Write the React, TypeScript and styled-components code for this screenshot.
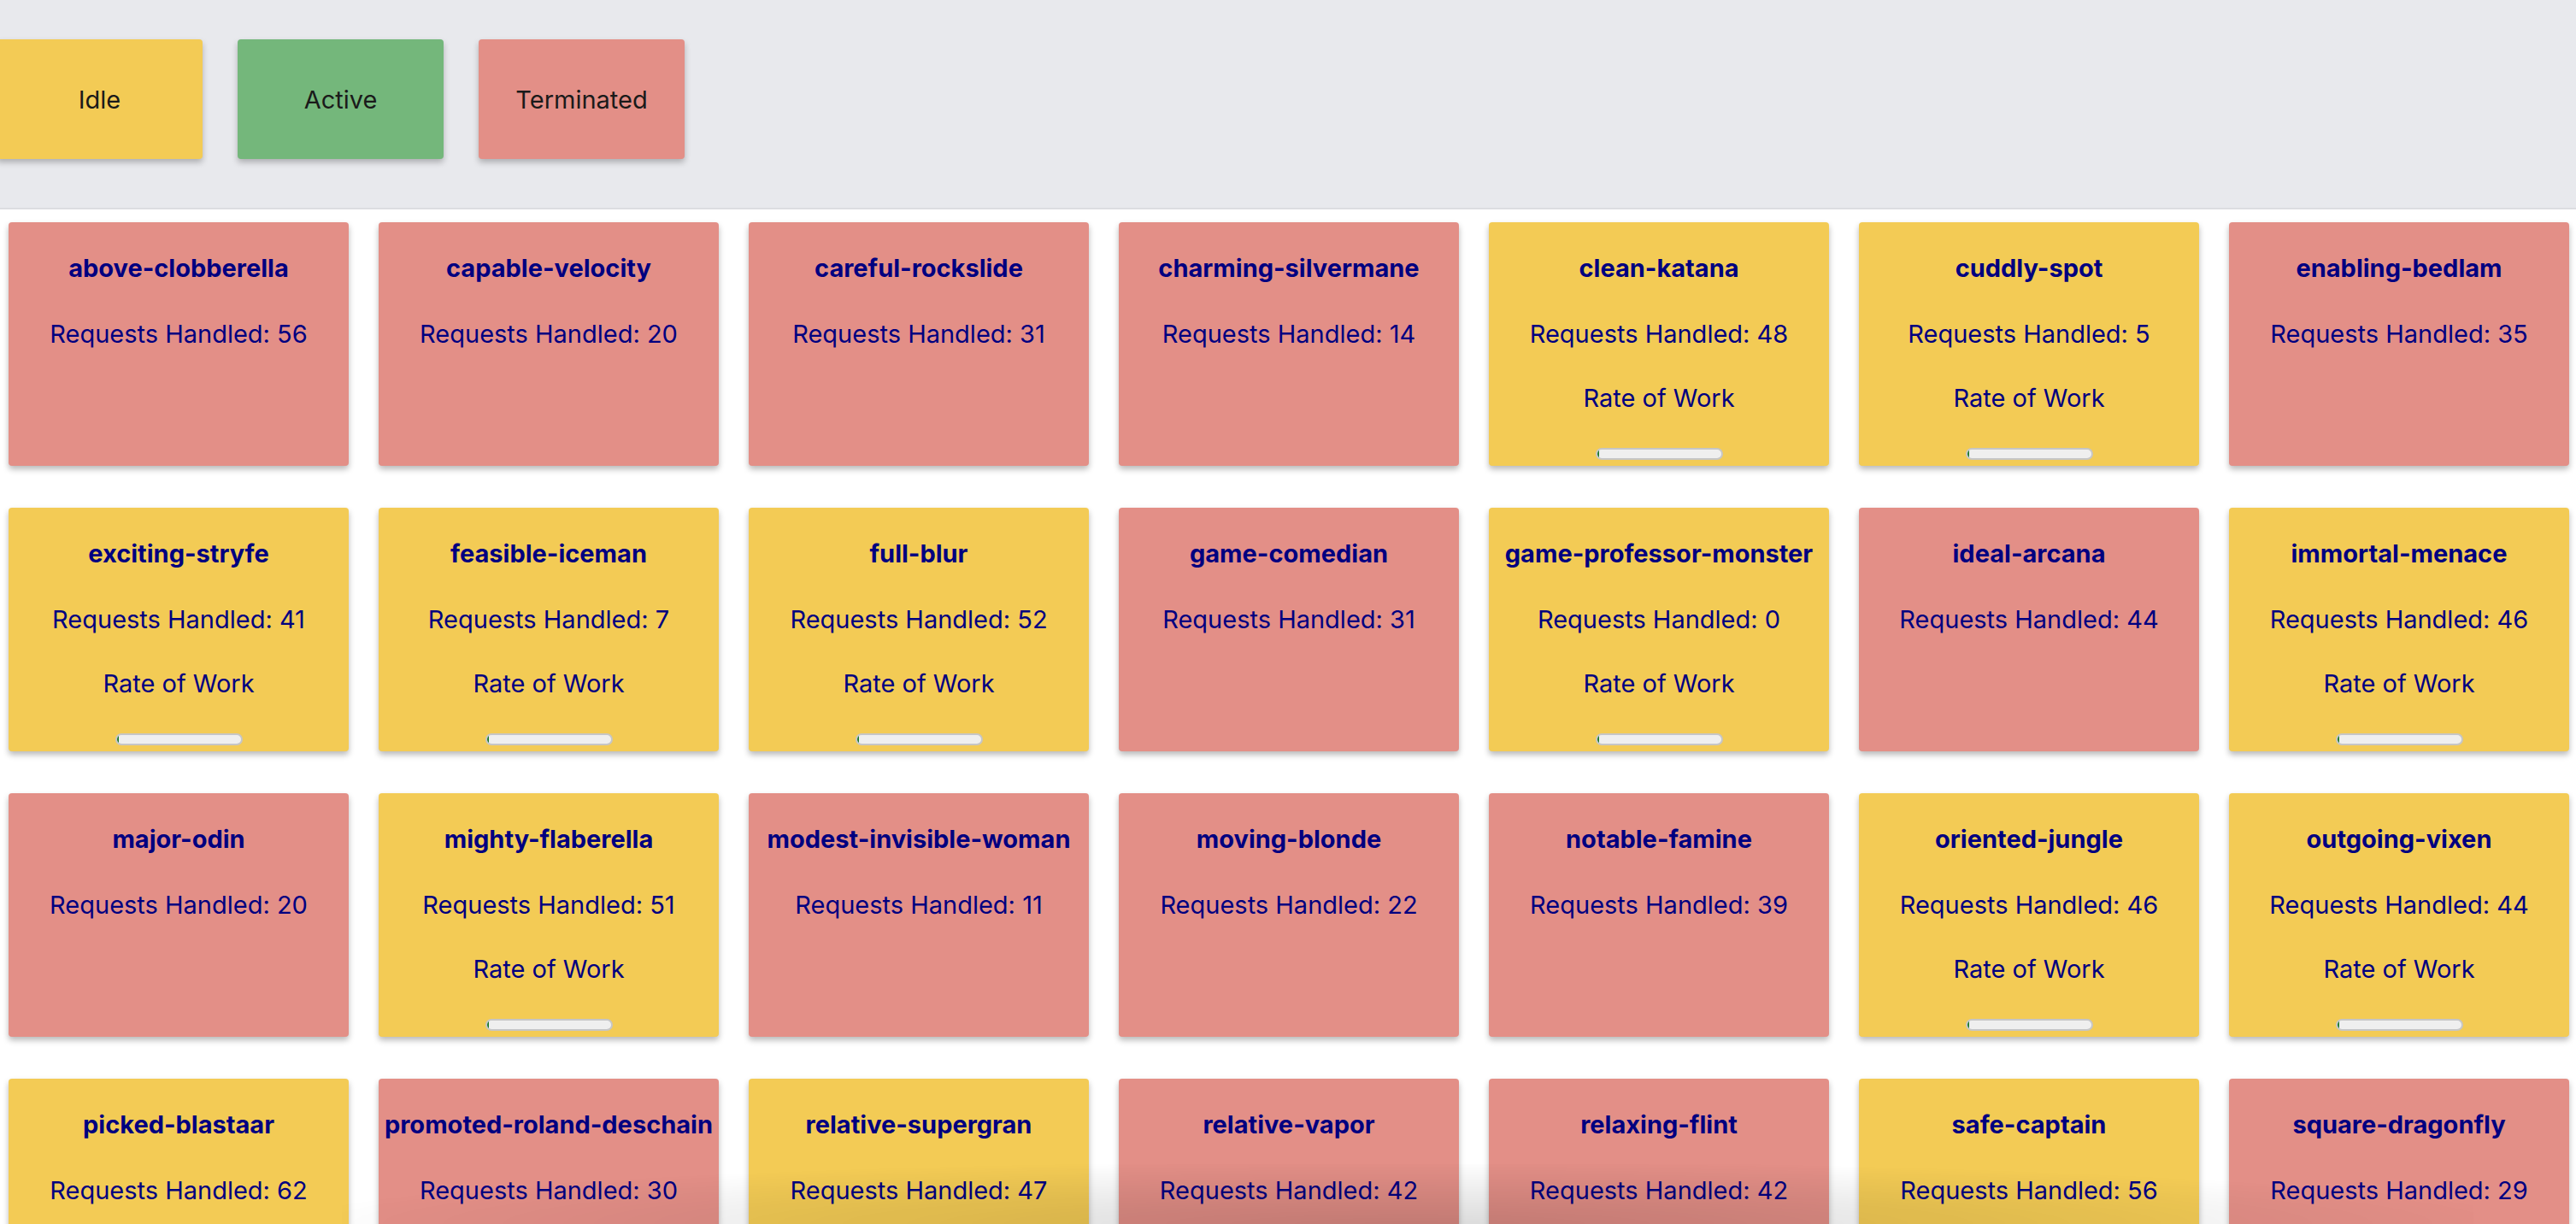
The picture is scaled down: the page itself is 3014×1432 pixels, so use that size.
import React from "react";
import styled, { createGlobalStyle } from "styled-components";

type Status = "idle" | "active" | "terminated";

const COLORS: Record<Status, string> = {
  idle: "#f3cb55",
  active: "#74b77b",
  terminated: "#e38f87",
};

const GlobalStyle = createGlobalStyle`
  html, body {
    margin: 0;
    padding: 0;
    background: #ffffff;
    font-family: Inter, "Noto Sans", "Liberation Sans", sans-serif;
    overflow: hidden;
  }
  #root { width: 3014px; }
`;

const Page = styled.div`
  display: flex;
  flex-direction: column;
  width: 3014px;
  min-height: 1432px;
`;

const Header = styled.header`
  display: flex;
  flex-direction: row;
  align-items: flex-start;
  height: 245px;
  box-sizing: border-box;
  padding-top: 46px;
  background: #e8e9ed;
  border-bottom: 2px solid #dcdde1;
  overflow: hidden;
`;

const LegendRow = styled.div`
  display: flex;
  gap: 41px;
  margin-left: -4px;
`;

const LegendBox = styled.div<{ $status: Status }>`
  width: 241px;
  height: 140px;
  display: flex;
  align-items: center;
  justify-content: center;
  border-radius: 4px;
  background: ${(p) => COLORS[p.$status]};
  box-shadow: 0 4px 7px rgba(0, 0, 0, 0.25);
  color: #1a1a1a;
  font-size: 29px;
  font-weight: 400;
`;

const Grid = styled.main`
  display: grid;
  grid-template-columns: repeat(7, 398px);
  column-gap: 35px;
  row-gap: 49px;
  padding: 15px 0 40px 10px;
`;

const Card = styled.div<{ $status: Status }>`
  height: 285px;
  box-sizing: border-box;
  display: flex;
  flex-direction: column;
  align-items: center;
  border-radius: 4px;
  background: ${(p) => COLORS[p.$status]};
  box-shadow: 0 4px 7px rgba(0, 0, 0, 0.28);
  color: #000080;
`;

const Title = styled.h3`
  margin: 37px 0 0;
  font-size: 29px;
  line-height: 34px;
  font-weight: 700;
  white-space: nowrap;
`;

const Line = styled.p<{ $gap: number }>`
  margin: ${(p) => p.$gap}px 0 0;
  font-size: 29px;
  line-height: 34px;
  font-weight: 400;
  white-space: nowrap;
`;

const Progress = styled.div`
  margin-top: 41px;
  width: 149px;
  height: 14px;
  box-sizing: border-box;
  border: 2px solid #c6c6c6;
  border-radius: 7px;
  background: #efefef;
  overflow: hidden;
  display: flex;
`;

const ProgressFill = styled.div`
  height: 100%;
  background: #1f7a2e;
  border-radius: 5px 0 0 5px;
`;

const BottomShade = styled.div`
  position: fixed;
  left: 400px;
  right: 120px;
  bottom: 0;
  height: 70px;
  pointer-events: none;
  background: radial-gradient(
    ellipse at 50% 100%,
    rgba(0, 0, 0, 0.14) 0%,
    rgba(0, 0, 0, 0.06) 45%,
    rgba(0, 0, 0, 0) 75%
  );
`;

type Worker = { name: string; status: Status; requests: number };

const workers: Worker[] = [
  { name: "above-clobberella", status: "terminated", requests: 56 },
  { name: "capable-velocity", status: "terminated", requests: 20 },
  { name: "careful-rockslide", status: "terminated", requests: 31 },
  { name: "charming-silvermane", status: "terminated", requests: 14 },
  { name: "clean-katana", status: "idle", requests: 48 },
  { name: "cuddly-spot", status: "idle", requests: 5 },
  { name: "enabling-bedlam", status: "terminated", requests: 35 },
  { name: "exciting-stryfe", status: "idle", requests: 41 },
  { name: "feasible-iceman", status: "idle", requests: 7 },
  { name: "full-blur", status: "idle", requests: 52 },
  { name: "game-comedian", status: "terminated", requests: 31 },
  { name: "game-professor-monster", status: "idle", requests: 0 },
  { name: "ideal-arcana", status: "terminated", requests: 44 },
  { name: "immortal-menace", status: "idle", requests: 46 },
  { name: "major-odin", status: "terminated", requests: 20 },
  { name: "mighty-flaberella", status: "idle", requests: 51 },
  { name: "modest-invisible-woman", status: "terminated", requests: 11 },
  { name: "moving-blonde", status: "terminated", requests: 22 },
  { name: "notable-famine", status: "terminated", requests: 39 },
  { name: "oriented-jungle", status: "idle", requests: 46 },
  { name: "outgoing-vixen", status: "idle", requests: 44 },
  { name: "picked-blastaar", status: "idle", requests: 62 },
  { name: "promoted-roland-deschain", status: "terminated", requests: 30 },
  { name: "relative-supergran", status: "idle", requests: 47 },
  { name: "relative-vapor", status: "terminated", requests: 42 },
  { name: "relaxing-flint", status: "terminated", requests: 42 },
  { name: "safe-captain", status: "idle", requests: 56 },
  { name: "square-dragonfly", status: "terminated", requests: 29 },
];

const WorkerCard: React.FC<{ w: Worker }> = ({ w }) => (
  <Card $status={w.status}>
    <Title>{w.name}</Title>
    <Line $gap={43}>Requests Handled: {w.requests}</Line>
    {w.status !== "terminated" && (
      <>
        <Line $gap={41}>Rate of Work</Line>
        <Progress>
          <ProgressFill style={{ width: "2px" }} />
        </Progress>
      </>
    )}
  </Card>
);

export default function App() {
  return (
    <Page>
      <GlobalStyle />
      <Header>
        <LegendRow>
          <LegendBox $status="idle">Idle</LegendBox>
          <LegendBox $status="active">Active</LegendBox>
          <LegendBox $status="terminated">Terminated</LegendBox>
        </LegendRow>
      </Header>
      <Grid>
        {workers.map((w) => (
          <WorkerCard key={w.name} w={w} />
        ))}
      </Grid>
      <BottomShade />
    </Page>
  );
}
